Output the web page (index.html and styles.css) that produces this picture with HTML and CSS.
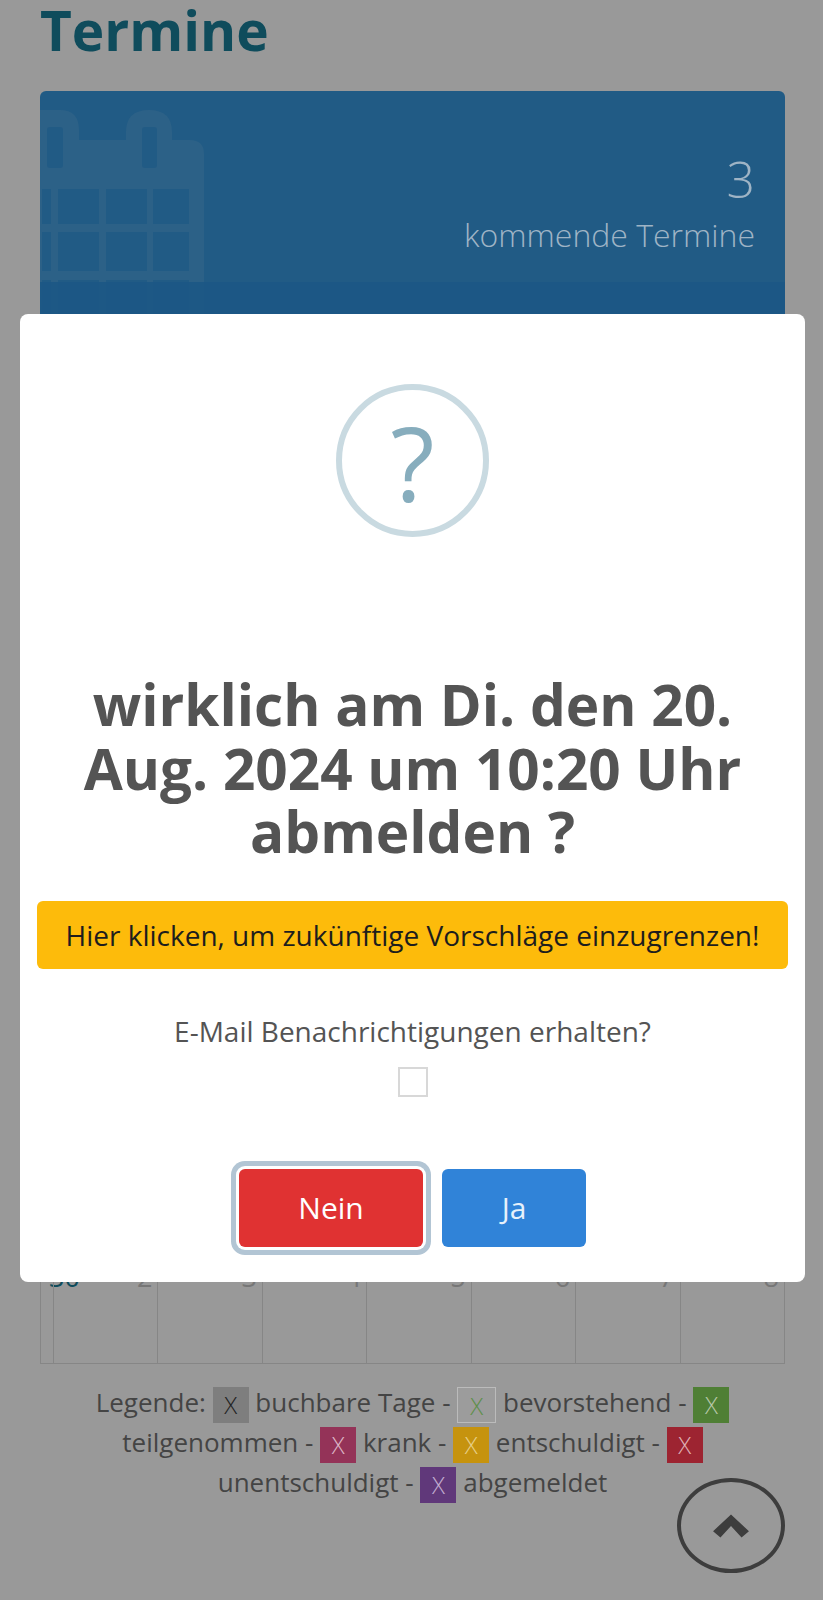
FILE: index.html
```html
<!DOCTYPE html>
<html lang="de">
<head>
<meta charset="utf-8">
<title>Termine</title>
<link rel="stylesheet" href="styles.css">
</head>
<body>
<main class="page">
  <h1 class="title">Termine</h1>
  <section class="stat-card">
    <svg class="stat-icon" viewBox="0 0 164 210" aria-hidden="true">
      <path class="cal-body" d="M0 0H20Q39 0 39 20V30H86V22Q86 0 109 0Q132 0 132 22V30H150Q164 30 164 44V210H0Z"/>
      <g class="cal-slot">
        <rect x="7" y="17" width="16" height="41" rx="3"/>
        <rect x="102" y="17" width="15" height="41" rx="3"/>
        <rect x="2" y="79" width="9" height="35"/>
        <rect x="18" y="79" width="41" height="35"/>
        <rect x="66" y="79" width="41" height="35"/>
        <rect x="113" y="79" width="36" height="35"/>
        <rect x="2" y="122" width="9" height="39"/>
        <rect x="18" y="122" width="41" height="39"/>
        <rect x="66" y="122" width="41" height="39"/>
        <rect x="113" y="122" width="36" height="39"/>
        <rect x="2" y="170" width="9" height="40"/>
        <rect x="18" y="170" width="41" height="40"/>
        <rect x="66" y="170" width="41" height="40"/>
        <rect x="113" y="170" width="36" height="40"/>
      </g>
    </svg>
    <div class="stat-text">
      <div class="stat-number">3</div>
      <div class="stat-label">kommende Termine</div>
    </div>
    <div class="stat-footer"></div>
  </section>

  <section class="calendar">
    <div class="cal-cell cal-week"><span class="cal-week-num">30</span></div>
    <div class="cal-cell">2</div>
    <div class="cal-cell">3</div>
    <div class="cal-cell">4</div>
    <div class="cal-cell">5</div>
    <div class="cal-cell">6</div>
    <div class="cal-cell">7</div>
    <div class="cal-cell">8</div>
  </section>

  <p class="legend">
    Legende: <span class="chip chip-grey">X</span> buchbare Tage - <span class="chip chip-outline">X</span> bevorstehend - <span class="chip chip-green">X</span>
    teilgenommen - <span class="chip chip-pink">X</span> krank - <span class="chip chip-amber">X</span> entschuldigt - <span class="chip chip-red">X</span>
    unentschuldigt - <span class="chip chip-purple">X</span> abgemeldet
  </p>
</main>

<button class="scroll-top" aria-label="Nach oben">
  <svg viewBox="0 0 36 24" aria-hidden="true"><path d="M18 1 35 17 28 23 18 12 8 23 1 17Z"/></svg>
</button>

<div class="dialog" role="dialog">
  <div class="dialog-icon">?</div>
  <h2 class="dialog-title">wirklich am Di. den 20. Aug. 2024 um 10:20 Uhr abmelden ?</h2>
  <div class="dialog-banner">Hier klicken, um zukünftige Vorschläge einzugrenzen!</div>
  <label class="dialog-label" for="mail">E-Mail Benachrichtigungen erhalten?</label>
  <span class="dialog-check" id="mail"></span>
  <div class="dialog-actions">
    <button class="btn btn-no">Nein</button>
    <button class="btn btn-yes">Ja</button>
  </div>
</div>
</body>
</html>
```
FILE: styles.css
```css
* { box-sizing: border-box; }
html, body { margin: 0; height: 1600px; overflow: hidden; }
body {
  position: relative;
  background: #999;
  font-family: "Open Sans", "Noto Sans", sans-serif;
  color: #444;
}
.page { padding: 0 38px 0 40px; }
.title {
  margin: 0;
  height: 91px;
  font-size: 55px;
  line-height: 60px;
  font-weight: 700;
  color: #0f4c5c;
}
.stat-card {
  position: relative;
  height: 299px;
  border-radius: 6px;
  background: #215b85;
  overflow: hidden;
}
.stat-icon {
  position: absolute;
  left: 0;
  top: 19px;
  width: 164px;
  height: 210px;
}
.cal-body { fill: #2c6187; }
.cal-slot rect { fill: #215b85; }
.stat-text {
  position: relative;
  padding: 58px 30px 0 0;
  text-align: right;
  color: #9fb4c5;
  font-weight: 300;
}
.stat-number { font-size: 50px; line-height: 60px; }
.stat-label { font-size: 32px; line-height: 51px; }
.stat-footer {
  position: absolute;
  left: 0;
  right: 0;
  top: 191px;
  bottom: 0;
  background: rgba(27, 87, 133, 0.85);
}
.calendar {
  display: grid;
  grid-template-columns: 12px repeat(7, 1fr);
  height: 170px;
  margin-top: 804px;
  border: 1px solid #868686;
  border-top: 0;
}
.cal-cell {
  position: relative;
  padding: 68px 5px 0 0;
  border-left: 1px solid #868686;
  text-align: right;
  font-size: 27px;
  line-height: 30px;
  color: #777;
}
.cal-cell:first-child { border-left: 0; }
.cal-week-num {
  position: absolute;
  left: 8px;
  top: 68px;
  color: #0f4c5c;
}
.legend {
  margin: 19px 0 0;
  text-align: center;
  font-size: 26px;
  line-height: 38px;
  color: #444;
}
.chip {
  display: inline-block;
  width: 36px;
  height: 36px;
  font-size: 24px;
  font-weight: 300;
  line-height: 36px;
  text-align: center;
  vertical-align: middle;
  color: #ddd;
}
.chip-grey { background: #7e7e7e; color: #222; }
.chip-outline { width: 39px; background: #9c9c9c; border: 1px solid #bbb; color: #5e8f4a; }
.chip-green { background: #4f7f35; color: #b6c7a8; }
.chip-pink { background: #943358; color: #dcb5c6; }
.chip-amber { background: #c6930e; color: #e6cf87; }
.chip-red { background: #9d2431; color: #dfb1b5; }
.chip-purple { background: #60387a; color: #c2acd0; }
.scroll-top {
  position: absolute;
  left: 677px;
  top: 1478px;
  width: 108px;
  height: 95px;
  padding: 0;
  border: 4px solid #3d3d3d;
  border-radius: 50%;
  background: transparent;
}
.scroll-top svg {
  display: block;
  width: 38px;
  height: 26px;
  margin: 0 auto;
  fill: #3d3d3d;
}
.dialog {
  position: absolute;
  left: 20px;
  top: 314px;
  width: 785px;
  height: 968px;
  padding: 70px 17px 0;
  border-radius: 8px;
  background: #fff;
  display: flex;
  flex-direction: column;
  align-items: center;
  text-align: center;
  color: #545454;
}
.dialog-icon {
  width: 153px;
  height: 153px;
  border: 6px solid #c9dae1;
  border-radius: 50%;
  font-size: 102px;
  line-height: 145px;
  font-weight: 500;
  color: #87adbd;
}
.dialog-title {
  margin: 136px 0 0;
  width: 680px;
  font-size: 56.7px;
  line-height: 63.5px;
  font-weight: 700;
}
.dialog-banner {
  align-self: stretch;
  margin-top: 37px;
  height: 68px;
  border-radius: 6px;
  background: #fdbb0b;
  color: #1d1d1d;
  font-size: 28px;
  line-height: 69px;
}
.dialog-label {
  margin-top: 43px;
  font-size: 28px;
  line-height: 38px;
}
.dialog-check {
  margin-top: 17px;
  width: 30px;
  height: 30px;
  border: 2px solid #d8d8d8;
}
.dialog-actions {
  display: flex;
  gap: 19px;
  margin-top: 72px;
}
.btn {
  height: 78px;
  padding: 0;
  border: 0;
  border-radius: 6px;
  font: inherit;
  font-size: 30px;
  color: #fff;
}
.btn-no {
  width: 184px;
  background: #e03232;
  box-shadow: 0 0 0 3px #fff, 0 0 0 8px #b2c5d4;
}
.btn-yes { width: 144px; background: #3083d8; color: #e6f1fb; }
```
